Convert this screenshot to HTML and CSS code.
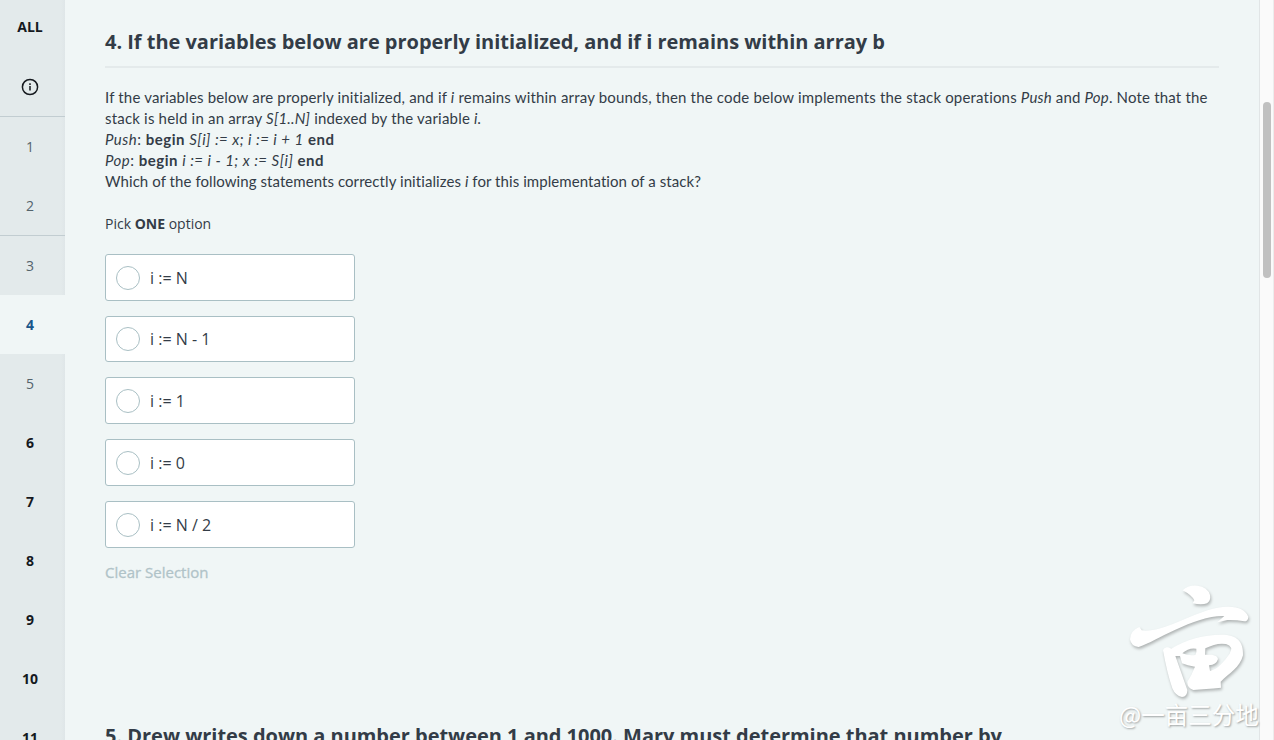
FILE: index.html
```html
<!DOCTYPE html>
<html lang="en">
<head>
<meta charset="utf-8">
<title>Question 4</title>
<link rel="stylesheet" href="styles.css">
</head>
<body>
<div class="app">
  <nav class="sidebar">
    <div class="nav-item all">ALL</div>
    <div class="nav-item info ruled">
      <svg width="18" height="18" viewBox="0 0 18 18" fill="none" stroke="#15191e" stroke-width="1.5"><circle cx="9" cy="9" r="7.6"/><path d="M9 8v4.6M9 5.2v1.7"/></svg>
    </div>
    <div class="nav-item">1</div>
    <div class="nav-item ruled second">2</div>
    <div class="nav-item">3</div>
    <div class="nav-item active">4</div>
    <div class="nav-item">5</div>
    <div class="nav-item todo">6</div>
    <div class="nav-item todo">7</div>
    <div class="nav-item todo">8</div>
    <div class="nav-item todo">9</div>
    <div class="nav-item todo">10</div>
    <div class="nav-item todo">11</div>
  </nav>
  <main class="content">
    <section class="question">
      <h2 class="title">4. If the variables below are properly initialized, and if i remains within array b</h2>
      <div class="statement">
        <div class="line l1">If the variables below are properly initialized, and if <i>i</i> remains within array bounds, then the code below implements the stack operations <i>Push</i> and <i>Pop</i>. Note that the</div>
        <div class="line l2">stack is held in an array <i>S[1..N]</i> indexed by the variable <i>i.</i></div>
        <div class="line l3"><i>Push</i>: <b>begin</b> <i>S[i] := x; i := i + 1</i> <b>end</b></div>
        <div class="line l4"><i>Pop</i>: <b>begin</b> <i>i := i - 1; x := S[i]</i> <b>end</b></div>
        <div class="line l5">Which of the following statements correctly initializes <i>i</i> for this implementation of a stack?</div>
      </div>
      <p class="hint">Pick <b>ONE</b> option</p>
      <div class="options">
        <label class="option"><span class="radio"></span>i := N</label>
        <label class="option"><span class="radio"></span>i := N - 1</label>
        <label class="option"><span class="radio"></span>i := 1</label>
        <label class="option"><span class="radio"></span>i := 0</label>
        <label class="option"><span class="radio"></span>i := N / 2</label>
      </div>
      <div class="clear">Clear Selection</div>
    </section>
    <section class="question next">
      <h2 class="title">5. Drew writes down a number between 1 and 1000. Mary must determine that number by</h2>
    </section>
  </main>
  <div class="scrollbar"><div class="thumb"></div></div>
  <div class="watermark">
    <svg class="mark" width="174" height="140" viewBox="0 0 522 420" fill="#fff" fill-rule="evenodd">
      <path d="M248 61Q264 45 292 47Q323 51 330 75Q333 92 321 100Q305 106 278 100L283 91Q276 76 248 61Z"/>
      <path d="M90 208Q91 182 118 171L125 181Q147 185 184 174C250 154 318 111 382 110Q432 109 445 140Q444 154 433 154Q407 149 382 150L352 157L373 138C331 136 279 155 226 179C177 201 148 220 116 231Q94 230 90 208Z"/>
      <path d="M189 240Q196 226 214 236C258 208 313 194 363 194C411 194 431 214 429 256C420 293 388 309 362 335L363 353Q315 357 280 360Q262 355 262 336Q275 315 285 290Q262 287 246 280L240 258L226 258L262 360Q262 380 246 381Q226 377 217 355Q201 308 189 240ZM247 250Q266 232 289 236Q291 247 286 255Q266 258 247 250ZM316 235Q350 217 378 222Q402 229 389 251C371 276 354 297 330 303L327 286Q349 284 354 267Q352 257 336 254L315 254Z"/>
    </svg>
    <div class="handle">@一亩三分地</div>
  </div>
</div>
</body>
</html>
```
FILE: styles.css
```css
* { box-sizing: border-box; }
body { margin: 0; overflow: hidden; font-family: "Open Sans", "Noto Sans", sans-serif; color: #333c47; background: #f0f6f6; }
.app { display: flex; height: 740px; overflow: hidden; position: relative; }
.sidebar { width: 65px; flex: none; background: linear-gradient(to right, #e3eaeb 61px, #dfe6e8 65px); }
.nav-item { height: 59px; display: flex; align-items: center; justify-content: center; padding: 0 5px 1px 0; font-size: 14px; color: #54636b; }
.all { height: 57px; padding: 0 5px 4px 0; font-weight: 700; color: #15191e; }
.info { height: 60px; padding: 1px 5px 0 0; }
.second { height: 60px; }
.ruled { border-bottom: 1px solid #c2cdd1; }
.active { background: #f0f6f6; color: #1a568a; font-weight: 700; }
.todo { color: #15191e; font-weight: 700; }
.content { flex: 1; padding: 26px 40px 0; min-width: 0; }
.title { margin: 0; padding-bottom: 9px; height: 42px; font-size: 20px; line-height: 31px; letter-spacing: -0.025px; font-weight: 700; border-bottom: 2px solid #e4eaeb; white-space: nowrap; }
.question { height: 694px; }
.statement { margin-top: 19px; font-family: Lato, sans-serif; font-size: 15px; line-height: 21px; }
.line { white-space: nowrap; }
.line b { font-weight: 700; }
.l1 { letter-spacing: 0.175px; }
.l2 { letter-spacing: 0.19px; }
.l3, .l4 { letter-spacing: 0.48px; }
.l5 { letter-spacing: 0.07px; }
.hint { margin: 21px 0 19.75px; font-size: 14px; line-height: 21px; }
.options { display: flex; flex-direction: column; gap: 15px; width: 250px; }
.option { height: 46.75px; display: flex; align-items: center; gap: 10px; padding: 1.1px 0 0 10px; background: #fff; border: 1px solid #a9bfc4; border-radius: 3px; font-size: 16px; }
.radio { width: 24px; height: 24px; border: 1px solid #a9bfc4; border-radius: 50%; }
.clear { margin-top: 13.25px; font-size: 15px; line-height: 22px; color: #b0c3c8; -webkit-text-stroke: 0.3px #b0c3c8; }
.scrollbar { width: 15px; flex: none; background: #fafafa; border-left: 1px solid #e1e5e6; border-right: 1px solid #ececec; padding: 102px 0 0 3px; }
.thumb { width: 8px; height: 176px; border-radius: 4px; background: #c0c0c0; }
.watermark { position: absolute; left: 1100px; top: 570px; width: 174px; height: 170px; }
.mark { display: block; filter: drop-shadow(1px 2px 1.5px rgba(0,0,0,.27)); }
.handle { margin: -11px 0 0 19px; font: 400 23.5px/30px "Noto Sans CJK SC", sans-serif; color: #fff; white-space: nowrap; text-shadow: 1px 1px 2px rgba(0,0,0,.35); }
```
